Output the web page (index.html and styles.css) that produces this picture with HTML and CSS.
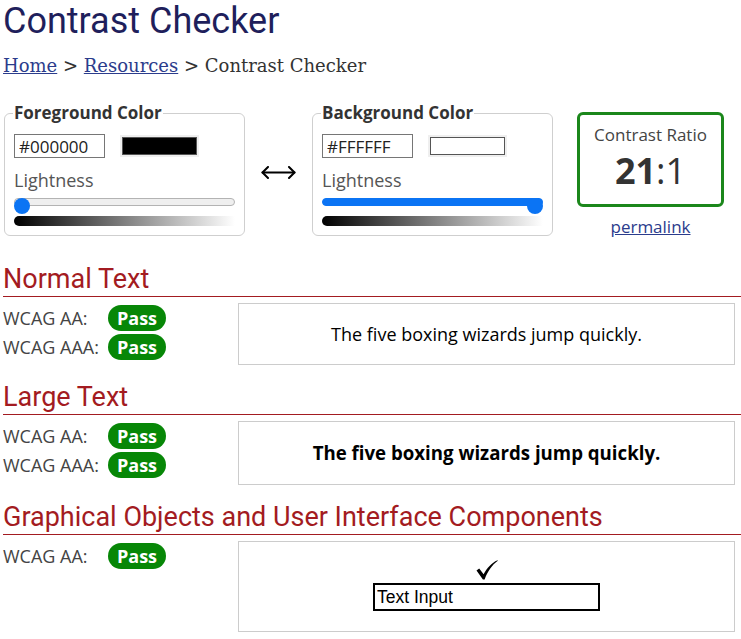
FILE: index.html
```html
<!DOCTYPE html>
<html lang="en">
<head>
<meta charset="utf-8">
<title>Contrast Checker</title>
<link rel="stylesheet" href="styles.css">
</head>
<body>
<h1 class="title">Contrast Checker</h1>
<p class="crumbs"><a href="#">Home</a> &gt; <a href="#">Resources</a> &gt; Contrast Checker</p>

<div class="controls">
  <fieldset class="picker">
    <legend>Foreground Color</legend>
    <div class="hexrow">
      <input class="hex" type="text" value="#000000">
      <span class="swatch"><span class="swatch-fill swatch-black"></span></span>
    </div>
    <div class="light-label">Lightness</div>
    <div class="slider">
      <div class="track"></div>
      <div class="thumb thumb-start"></div>
    </div>
    <div class="gradient"></div>
  </fieldset>

  <div class="swap" aria-label="swap colors">
    <svg width="35" height="13" viewBox="0 0 35 13" fill="none" stroke="#000" stroke-width="2" stroke-linecap="round" stroke-linejoin="round">
      <path d="M1.5 6.5 H33.5"/>
      <path d="M7 1 L1.5 6.5 L7 12"/>
      <path d="M28 1 L33.5 6.5 L28 12"/>
    </svg>
  </div>

  <fieldset class="picker">
    <legend>Background Color</legend>
    <div class="hexrow">
      <input class="hex" type="text" value="#FFFFFF">
      <span class="swatch"><span class="swatch-fill swatch-white"></span></span>
    </div>
    <div class="light-label">Lightness</div>
    <div class="slider">
      <div class="track track-full"></div>
      <div class="thumb thumb-end"></div>
    </div>
    <div class="gradient"></div>
  </fieldset>

  <div class="result">
    <div class="ratio-box">
      <div class="ratio-label">Contrast Ratio</div>
      <div class="ratio"><b>21</b>:1</div>
    </div>
    <a class="permalink" href="#">permalink</a>
  </div>
</div>

<h2 class="section-title">Normal Text</h2>
<div class="section">
  <div class="checks">
    <div class="check"><span class="check-label">WCAG AA:</span><span class="pass">Pass</span></div>
    <div class="check"><span class="check-label">WCAG AAA:</span><span class="pass">Pass</span></div>
  </div>
  <div class="sample sample-normal">The five boxing wizards jump quickly.</div>
</div>

<h2 class="section-title">Large Text</h2>
<div class="section">
  <div class="checks">
    <div class="check"><span class="check-label">WCAG AA:</span><span class="pass">Pass</span></div>
    <div class="check"><span class="check-label">WCAG AAA:</span><span class="pass">Pass</span></div>
  </div>
  <div class="sample sample-large">The five boxing wizards jump quickly.</div>
</div>

<h2 class="section-title">Graphical Objects and User Interface Components</h2>
<div class="section">
  <div class="checks">
    <div class="check"><span class="check-label">WCAG AA:</span><span class="pass">Pass</span></div>
  </div>
  <div class="sample sample-ui">
    <svg class="tick" width="22" height="20" viewBox="0 0 22 20">
      <path d="M0.5 10.5 L3.2 8.6 L7.6 14.2 C11 8 15.5 3 21.5 0.3 L21.8 0.8 C16 5 11.5 11.5 8.6 19.6 L6.9 19.6 Z" fill="#000"/>
    </svg>
    <input class="demo-input" type="text" value="Text Input">
  </div>
</div>
</body>
</html>
```

FILE: styles.css
```css
html {
  background: #fff;
}

body {
  margin: 0;
  padding: 0 0 0 3px;
  font-family: "Open Sans", "Liberation Sans", sans-serif;
  color: #333;
}

.title {
  margin: 0;
  font-family: Roboto, "Liberation Sans", sans-serif;
  font-weight: 400;
  font-size: 36px;
  line-height: 42px;
  color: #1f1f5c;
}

.crumbs {
  margin: 12px 0 0;
  font-family: "DejaVu Serif", "Liberation Serif", serif;
  font-size: 18px;
  line-height: 24px;
  color: #333;
}

.crumbs a {
  color: #2b3c8c;
  text-decoration: underline;
}

.controls {
  display: flex;
  align-items: flex-start;
  margin-top: 23px;
  margin-left: 1px;
}

.picker {
  margin: 0;
  width: 241px;
  box-sizing: border-box;
  padding: 0 9px 9px;
  border: 1px solid #cfcfcf;
  border-radius: 6px;
  min-inline-size: 0;
}

.picker legend {
  padding: 0 1px;
  margin-left: -1px;
  font-weight: 700;
  font-size: 17px;
  line-height: 24px;
  color: #333;
}

.hexrow {
  display: flex;
  align-items: center;
  margin-top: 9px;
}

.hex {
  box-sizing: border-box;
  width: 91px;
  height: 24px;
  margin: 0;
  padding: 0 4px;
  border: 1px solid #767676;
  border-radius: 0;
  font-family: "Open Sans", sans-serif;
  font-size: 17px;
  color: #222;
  background: #fff;
}

.swatch {
  display: block;
  margin-left: 15px;
  width: 79px;
  height: 22px;
  box-sizing: border-box;
  padding: 2px;
  background: #efefef;
}

.swatch-fill {
  display: block;
  height: 100%;
  box-sizing: border-box;
  border: 1px solid #555;
}

.swatch-black {
  background: #000;
}

.swatch-white {
  background: #fff;
}

.light-label {
  margin-top: 10px;
  font-size: 18px;
  line-height: 24px;
  color: #555;
}

.slider {
  position: relative;
  height: 16px;
  margin-top: 6px;
}

.track {
  margin-top: 4px;
  height: 8px;
  box-sizing: border-box;
  border: 1px solid #b3b3b3;
  border-radius: 4px;
  background: #efefef;
}

.track-full {
  border-color: #0b74f4;
  background: #0b74f4;
}

.thumb {
  position: absolute;
  top: 0;
  width: 16px;
  height: 16px;
  border-radius: 50%;
  background: #0b74f4;
}

.thumb-start {
  left: 0;
}

.thumb-end {
  right: 0;
}

.gradient {
  margin-top: 2px;
  height: 10px;
  border-radius: 5px 0 0 5px;
  background: linear-gradient(to right, #000, #fff);
}

.swap {
  width: 67px;
  display: flex;
  justify-content: center;
  margin-top: 65px;
}

.swap svg {
  display: block;
}

.result {
  margin-left: 24px;
  margin-top: 11px;
  display: flex;
  flex-direction: column;
  align-items: center;
  width: 147px;
}

.ratio-box {
  box-sizing: border-box;
  width: 147px;
  height: 95px;
  border: 3px solid #1b871b;
  border-radius: 6px;
  text-align: center;
  padding-top: 8px;
}

.ratio-label {
  font-size: 17px;
  line-height: 24px;
  color: #444;
}

.ratio {
  margin-top: 4px;
  font-size: 36px;
  line-height: 40px;
  color: #333;
}

.ratio b {
  font-weight: 700;
}

.permalink {
  margin-top: 8px;
  font-size: 17px;
  line-height: 24px;
  color: #2b3c8c;
  text-decoration: underline;
}

.section-title {
  margin: 25px 0 0;
  padding-bottom: 1px;
  font-family: Roboto, "Liberation Sans", sans-serif;
  font-weight: 400;
  font-size: 27px;
  line-height: 31px;
  color: #a31b21;
  border-bottom: 1px solid #a31b21;
}

.section + .section-title {
  margin-top: 17px;
}

.section {
  display: grid;
  grid-template-columns: 235px 1fr;
  margin-top: 6px;
}

.checks {
  display: flex;
  flex-direction: column;
}

.check {
  display: flex;
  align-items: center;
  height: 29px;
}

.check-label {
  width: 105px;
  font-size: 18px;
  line-height: 24px;
  color: #444;
}

.pass {
  display: inline-flex;
  align-items: center;
  justify-content: center;
  width: 58px;
  height: 26px;
  border-radius: 13px;
  background: #078707;
  color: #fff;
  font-weight: 700;
  font-size: 18px;
  line-height: 26px;
}

.sample {
  margin-right: 6px;
  border: 1px solid #cccccc;
  display: flex;
  flex-direction: column;
  align-items: center;
  justify-content: center;
  color: #000;
  text-align: center;
}

.sample-normal {
  height: 62px;
  box-sizing: border-box;
  font-size: 18px;
  line-height: 24px;
}

.sample-large {
  height: 64px;
  box-sizing: border-box;
  font-size: 18.66px;
  font-weight: 700;
  line-height: 26px;
}

.sample-ui {
  height: 91px;
  box-sizing: border-box;
  justify-content: flex-start;
  padding-top: 18px;
}

.tick {
  display: block;
}

.demo-input {
  display: block;
  box-sizing: border-box;
  margin: 3px 0 0;
  width: 227px;
  height: 28px;
  padding: 0 2px;
  border: 2px solid #000;
  border-radius: 0;
  background: #fff;
  font-family: "Liberation Sans", Arial, sans-serif;
  font-size: 17.5px;
  color: #000;
  outline: none;
}
```
